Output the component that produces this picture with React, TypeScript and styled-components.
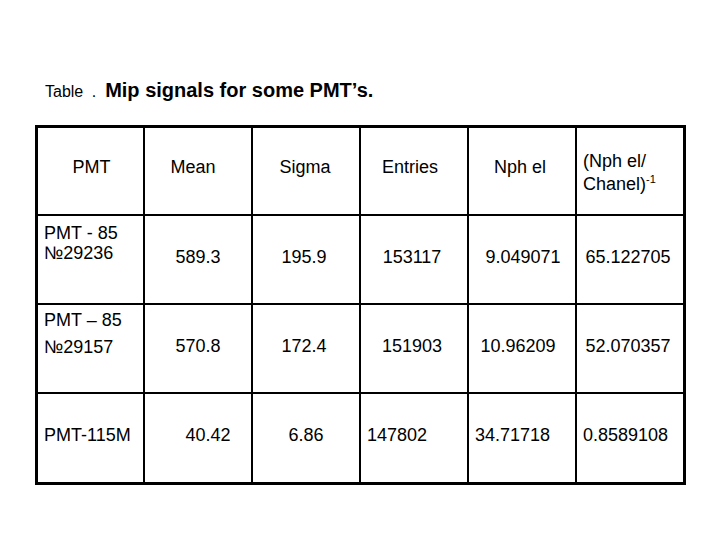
import React from "react";
import styled, { createGlobalStyle } from "styled-components";

// Grundstil för sidan: ingen marginal, vit bakgrund, Arial-bredd
const GlobalStyle = createGlobalStyle`
    html, body {
        margin: 0;
        padding: 0;
        background: #ffffff;
    }
    body {
        font-family: "Liberation Sans", Arial, sans-serif;
        color: #000000;
    }
`;

type Align = "center" | "left";

// Kolumnbredder inklusive den inre linjen (2px)
const columns = [107, 108, 108, 108, 108, 106];

// CSS

const Page = styled.div`
    width: 720px;
    height: 540px;
    box-sizing: border-box;
    padding-top: 78px;
    background: #ffffff;
`;

const Title = styled.div`
    display: flex;
    align-items: baseline;
    padding-left: 45px;
    height: 24px;
    line-height: 24px;
`;

const TitleLabel = styled.span`
    font-size: 16px;
    word-spacing: 4px;
    margin-right: 9px;
`;

const TitleText = styled.span`
    font-size: 20px;
    font-weight: bold;
`;

const Table = styled.div`
    display: grid;
    grid-template-columns: ${columns.map((w) => w + "px").join(" ")};
    width: fit-content;
    margin-top: 23px;
    margin-left: 35px;
    border: 3px solid #000000;
`;

const Cell = styled.div<{
    $width: number;
    $height: number;
    $lastCol: boolean;
    $lastRow: boolean;
    $align: Align;
    $shift: number;
    $top: number;
    $lineHeight: number;
}>`
    box-sizing: border-box;
    width: ${(p) => p.$width}px;
    height: ${(p) => p.$height}px;
    border-right: ${(p) => (p.$lastCol ? "none" : "2px solid #000000")};
    border-bottom: ${(p) => (p.$lastRow ? "none" : "2px solid #000000")};
    padding-top: ${(p) => p.$top}px;
    padding-left: ${(p) =>
        p.$align === "left" ? 6 : Math.max(0, p.$shift * 2)}px;
    padding-right: ${(p) =>
        p.$align === "left" ? 0 : Math.max(0, -p.$shift * 2)}px;
    text-align: ${(p) => p.$align};
    font-size: 18px;
    line-height: ${(p) => p.$lineHeight}px;
    white-space: nowrap;
`;

const Line = styled.div``;

const Sup = styled.sup`
    font-size: 11px;
    line-height: 0;
    vertical-align: 7px;
`;

interface CellData {
    lines: React.ReactNode[];
    align?: Align;
    shift?: number;
    top?: number;
    lineHeight?: number;
}

interface RowData {
    height: number;
    top: number;
    lineHeight: number;
    cells: CellData[];
    last?: boolean;
}

const rows: RowData[] = [
    {
        height: 88,
        top: 29,
        lineHeight: 20,
        cells: [
            { lines: ["PMT"], shift: 1 },
            { lines: ["Mean"], shift: -5 },
            { lines: ["Sigma"], shift: -1 },
            { lines: ["Entries"], shift: -4 },
            { lines: ["Nph el"], shift: -2 },
            {
                lines: [
                    "(Nph el/",
                    <>
                        Chanel)<Sup>-1</Sup>
                    </>,
                ],
                align: "left",
                top: 22,
                lineHeight: 23,
            },
        ],
    },
    {
        height: 89,
        top: 31,
        lineHeight: 20,
        cells: [
            { lines: ["PMT - 85", "№29236"], align: "left", top: 7 },
            { lines: ["589.3"] },
            { lines: ["195.9"], shift: -2 },
            { lines: ["153117"], shift: -2 },
            { lines: ["9.049071"], shift: 1 },
            { lines: ["65.122705"], shift: -2 },
        ],
    },
    {
        height: 89,
        top: 31,
        lineHeight: 20,
        cells: [
            { lines: ["PMT – 85", "№29157"], align: "left", top: 2, lineHeight: 27 },
            { lines: ["570.8"] },
            { lines: ["172.4"], shift: -2 },
            { lines: ["151903"], shift: -2 },
            { lines: ["10.96209"], shift: -4 },
            { lines: ["52.070357"], shift: -2 },
        ],
    },
    {
        height: 88,
        top: 31,
        lineHeight: 20,
        last: true,
        cells: [
            { lines: ["PMT-115M"], align: "left" },
            { lines: ["40.42"], shift: 10 },
            { lines: ["6.86"] },
            { lines: ["147802"], align: "left" },
            { lines: ["34.71718"], align: "left" },
            { lines: ["0.8589108"], align: "left" },
        ],
    },
];

const App: React.FC = () => {
    return (
        <>
            <GlobalStyle />
            <Page>
                <Title>
                    <TitleLabel>Table .</TitleLabel>
                    <TitleText>Mip signals for some PMT’s.</TitleText>
                </Title>

                <Table>
                    {rows.map((row, r) =>
                        row.cells.map((cell, c) => (
                            <Cell
                                key={r + "-" + c}
                                $width={columns[c]}
                                $height={row.height}
                                $lastCol={c === columns.length - 1}
                                $lastRow={!!row.last}
                                $align={cell.align || "center"}
                                $shift={cell.shift || 0}
                                $top={cell.top ?? row.top}
                                $lineHeight={cell.lineHeight ?? row.lineHeight}
                            >
                                {cell.lines.map((line, i) => (
                                    <Line key={i}>{line}</Line>
                                ))}
                            </Cell>
                        ))
                    )}
                </Table>
            </Page>
        </>
    );
};

export default App;
